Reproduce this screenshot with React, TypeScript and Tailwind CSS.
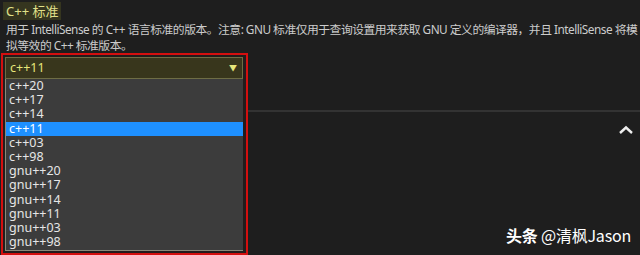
import React from "react";

const items = ["c++20","c++17","c++14","c++11","c++03","c++98","gnu++20","gnu++17","gnu++14","gnu++11","gnu++03","gnu++98"];

export default function App() {
  return (
    <div className="relative w-[640px] h-[255px] overflow-hidden bg-[#1e1e1e] text-[#cccccc]" style={{ fontFamily: '"Noto Sans", "Noto Sans CJK SC", sans-serif' }}>
      <div className="h-[21px] pt-[2px] pl-[3px] flex items-start">
        <span className="block bg-[#35351f] px-[3px] h-[18px] leading-[18px] text-[13px] text-[#e0e08a]">C++ 标准</span>
      </div>
      <div className="pl-[6px] text-[11.8px] leading-[16px] tracking-[-0.5px] whitespace-nowrap h-[32px]" style={{ fontFamily: '"Noto Sans", "Noto Sans CJK SC", sans-serif' }}>
        <div>用于 IntelliSense 的 C++ 语言标准的版本。注意: GNU 标准仅用于查询设置用来获取 GNU 定义的编译器，并且 IntelliSense 将模</div>
        <div>拟等效的 C++ 标准版本。</div>
      </div>
      <div className="flex">
        <div className="ml-[1px] w-[247px] h-[202px] border-2 border-[#d40f0f] bg-[#231c1c] pl-[2px] pt-[2px]">
          <div className="w-[238px] h-[22px] border border-[#6e6d45] bg-[#38361c] flex items-center justify-between pl-[4px] pr-[5px]">
            <span className="text-[12.5px] leading-[14px] text-[#e6e67a]">c++11</span>
            <span className="text-[8px] leading-[8px] text-[#e6e67a]">▼</span>
          </div>
          <div className="w-[238px] h-[172px] bg-[#3c3c3c] border-l border-b border-[#8a8a7a] flex flex-col">
            {items.map((it) => (
              <div key={it} className={`h-[14.2px] shrink-0 leading-[14px] pl-[3px] text-[12.5px] ${it === "c++11" ? "bg-[#1e90ff] text-white" : "text-[#e6e6e6]"}`}>{it}</div>
            ))}
          </div>
        </div>
        <div className="flex-1 flex flex-col">
          <div className="mt-[57px] h-[2px] bg-[#333333]" />
          <div className="flex justify-end pr-[6px] pt-[13px]">
            <svg width="16" height="10" viewBox="0 0 16 10">
              <path d="M2 8 L8 2.5 L14 8" fill="none" stroke="#eeeeee" strokeWidth="2.4" />
            </svg>
          </div>
        </div>
      </div>
      <div className="absolute right-[9px] top-[224px] text-[16px] leading-[22px] text-white tracking-[-0.2px]" style={{ fontFamily: '"Noto Sans CJK SC", sans-serif' }}>
        <span className="font-bold">头条</span> @清枫Jason
      </div>
    </div>
  );
}
